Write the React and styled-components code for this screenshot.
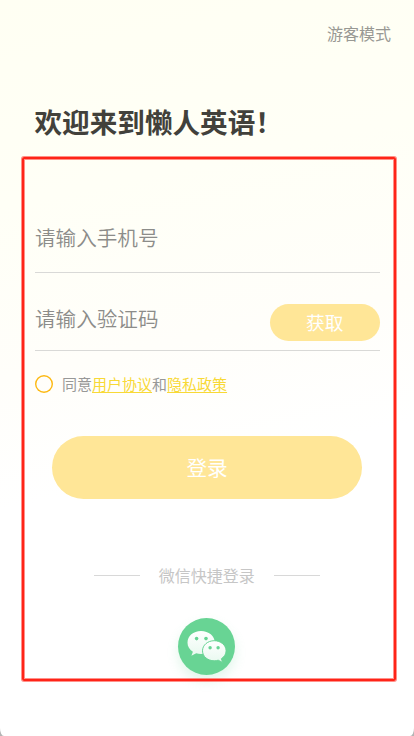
import React from "react";
import styled, { createGlobalStyle } from "styled-components";

const GlobalStyle = createGlobalStyle`
  * { box-sizing: border-box; }
  body { margin: 0; background: #b4b4b4; }
  button, input { font-family: inherit; }
`;

const Screen = styled.main`
  position: relative;
  display: flex;
  flex-direction: column;
  width: 414px;
  height: 736px;
  padding: 0 34.5px 0 35px;
  overflow: hidden;
  border-radius: 0 0 4px 4px / 0 0 8px 8px;
  background: linear-gradient(168deg, #fffff3 0%, #fffff6 25%, #fffefa 46%, #ffffff 62%);
  font-family: "Noto Sans CJK SC", sans-serif;
  color: #888;
`;

const TopBar = styled.header`
  display: flex;
  justify-content: flex-end;
  height: 68px;
  padding-top: 21px;
  margin-right: -11.5px;
`;

const GuestLink = styled.a`
  font-size: 16px;
  line-height: 24px;
  color: #989893;
`;

const Title = styled.h1`
  height: 40px;
  margin: 33px 0 0 -0.5px;
  font-size: 27.6px;
  line-height: 40px;
  font-weight: 700;
  color: #42413b;
  white-space: nowrap;
`;

const Field = styled.div`
  display: flex;
  align-items: center;
  justify-content: space-between;
  height: ${({ $height }) => $height}px;
  margin-top: ${({ $gap }) => $gap}px;
  border-bottom: 1px solid #d9d9d7;
`;

const Input = styled.input`
  width: 220px;
  height: 32px;
  padding: 0;
  margin-bottom: ${({ $lift }) => $lift}px;
  border: 0;
  outline: 0;
  background: transparent;
  font-size: 20.6px;
  font-weight: 350;
  &::placeholder { color: #8c8c89; opacity: 1; }
`;

const PillButton = styled.button`
  display: flex;
  align-items: center;
  justify-content: center;
  flex: none;
  width: ${({ $width }) => $width}px;
  height: ${({ $height }) => $height}px;
  padding: 0 0 ${({ $lift }) => $lift}px;
  border: 0;
  border-radius: 32px;
  background: #ffe697;
  color: #fff;
  font-size: ${({ $size }) => $size}px;
`;

const Agreement = styled.div`
  display: flex;
  align-items: center;
  height: 24px;
  margin-top: 21px;
  font-size: 15px;
  line-height: 24px;
  color: #989898;
  white-space: nowrap;
`;

const Radio = styled.span`
  width: 18px;
  height: 18px;
  margin-right: 9px;
  border-radius: 50%;
  box-shadow: inset 0 0 0 1.4px #fdb913;
`;

const PolicyLink = styled.a`
  color: #f8d936;
  text-decoration: underline;
  text-decoration-thickness: 1px;
  text-underline-offset: 2px;
`;

const LoginRow = styled.div`
  display: flex;
  justify-content: center;
  margin: 40px 0 0 -0.5px;
`;

const Divider = styled.div`
  display: flex;
  align-items: center;
  justify-content: center;
  gap: 19px;
  height: 24px;
  margin: 64px 0 0 -1px;
  font-size: 16px;
  line-height: 24px;
  color: #c6c6c6;
`;

const DividerLabel = styled.span`
  margin-top: -1px;
`;

const Rule = styled.span`
  width: 46px;
  height: 1px;
  background: #d8d8d8;
`;

const WechatButton = styled.button`
  align-self: center;
  width: 57px;
  height: 57px;
  margin: 31px 0 0 -1px;
  padding: 0;
  border: 0;
  border-radius: 50%;
  background: #68d494;
  box-shadow: 0 6px 12px rgba(104, 212, 148, 0.2);
`;

const Frame = styled.div`
  position: absolute;
  top: 157px;
  left: 22px;
  width: 374px;
  height: 524px;
  border: 2px solid #ff2418;
  border-radius: 2px;
  box-shadow: 0 0 0 1px rgba(255, 36, 24, 0.5), inset 0 0 0 1px rgba(255, 36, 24, 0.5);
  pointer-events: none;
`;

function WechatIcon() {
  return (
    <svg width="57" height="57" viewBox="0 0 57 57" aria-hidden="true">
      <defs>
        <linearGradient id="bubble" x1="0" y1="0" x2="0" y2="1">
          <stop offset="0" stopColor="#ffffff" />
          <stop offset="1" stopColor="#e8f9ef" />
        </linearGradient>
      </defs>
      <path
        d="M23 13C15.3 13 9.5 18 9.5 24.7C9.5 28.4 11.5 31.6 14.9 33.8L13.4 37.8L18.2 35.3C19.7 35.8 21.3 36 23 36C30.7 36 36.8 31.2 36.8 24.7C36.8 18 30.7 13 23 13Z"
        fill="url(#bubble)"
      />
      <path
        d="M36.2 22.7C29.8 22.7 24.5 27.1 24.5 32.8C24.5 38.5 29.8 42.8 36.2 42.8C37.6 42.8 38.9 42.6 40.2 42.2L44.6 44.4L43.4 40.7C46.3 38.9 48.1 36.1 48.1 32.8C48.1 27.1 42.7 22.7 36.2 22.7Z"
        fill="url(#bubble)"
        stroke="#68d494"
        strokeWidth="1"
      />
      <g fill="#68d494">
        <circle cx="18.6" cy="20.6" r="1.8" />
        <circle cx="28" cy="20.6" r="1.8" />
        <circle cx="32.1" cy="29.7" r="1.7" />
        <circle cx="40.1" cy="29.7" r="1.7" />
      </g>
    </svg>
  );
}

export default function App() {
  return (
    <>
      <GlobalStyle />
      <Screen>
        <TopBar>
          <GuestLink>游客模式</GuestLink>
        </TopBar>
        <Title>欢迎来到懒人英语！</Title>
        <Field $height={70} $gap={62}>
          <Input type="tel" placeholder="请输入手机号" $lift={2} />
        </Field>
        <Field $height={56} $gap={22}>
          <Input placeholder="请输入验证码" $lift={9} />
          <PillButton $width={109.5} $height={37} $size={18.7} $lift={2}>获取</PillButton>
        </Field>
        <Agreement>
          <Radio />
          同意<PolicyLink>用户协议</PolicyLink>和<PolicyLink>隐私政策</PolicyLink>
        </Agreement>
        <LoginRow>
          <PillButton $width={310} $height={63} $size={20.6} $lift={2}>登录</PillButton>
        </LoginRow>
        <Divider>
          <Rule />
          <DividerLabel>微信快捷登录</DividerLabel>
          <Rule />
        </Divider>
        <WechatButton aria-label="微信登录">
          <WechatIcon />
        </WechatButton>
        <Frame />
      </Screen>
    </>
  );
}
